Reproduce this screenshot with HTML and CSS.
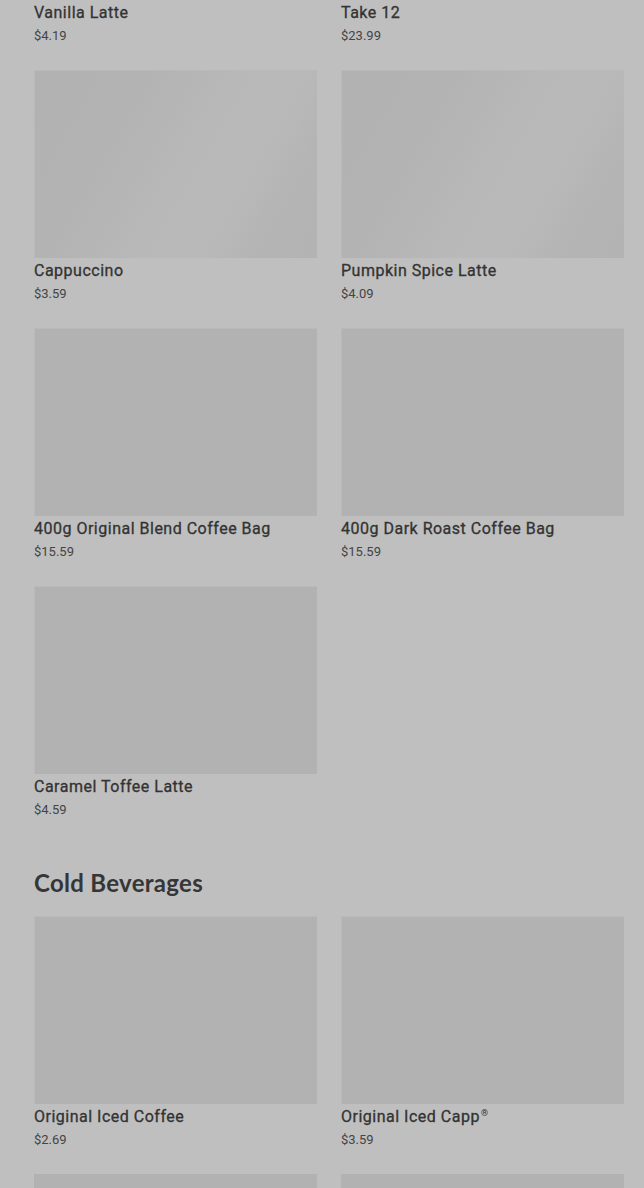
FILE: index.html
```html
<!DOCTYPE html>
<html lang="en">
    <head>
        <meta charset="UTF-8" />
        <meta name="viewport" content="width=device-width, initial-scale=1.0" />
        <title>Menu</title>
        <link rel="stylesheet" href="styles.css">
    </head>
    <body>
        <div class="menu">
            <section class="category">
                <div class="product-grid">
                    <div class="product">
                        <div class="product-image"></div>
                        <div class="product-name">Vanilla Latte</div>
                        <div class="product-price">$4.19</div>
                    </div>
                    <div class="product">
                        <div class="product-image"></div>
                        <div class="product-name">Take 12</div>
                        <div class="product-price">$23.99</div>
                    </div>
                    <div class="product">
                        <div class="product-image shimmer"></div>
                        <div class="product-name">Cappuccino</div>
                        <div class="product-price">$3.59</div>
                    </div>
                    <div class="product">
                        <div class="product-image shimmer"></div>
                        <div class="product-name">Pumpkin Spice Latte</div>
                        <div class="product-price">$4.09</div>
                    </div>
                    <div class="product">
                        <div class="product-image"></div>
                        <div class="product-name">400g Original Blend Coffee Bag</div>
                        <div class="product-price">$15.59</div>
                    </div>
                    <div class="product">
                        <div class="product-image"></div>
                        <div class="product-name">400g Dark Roast Coffee Bag</div>
                        <div class="product-price">$15.59</div>
                    </div>
                    <div class="product">
                        <div class="product-image"></div>
                        <div class="product-name">Caramel Toffee Latte</div>
                        <div class="product-price">$4.59</div>
                    </div>
                </div>
            </section>
            <section class="category">
                <h2 class="category-title">Cold Beverages</h2>
                <div class="product-grid">
                    <div class="product">
                        <div class="product-image"></div>
                        <div class="product-name">Original Iced Coffee</div>
                        <div class="product-price">$2.69</div>
                    </div>
                    <div class="product">
                        <div class="product-image"></div>
                        <div class="product-name">Original Iced Capp<sup class="reg">&reg;</sup></div>
                        <div class="product-price">$3.59</div>
                    </div>
                </div>
            </section>
        </div>
    </body>
</html>
```

FILE: styles.css
```css
body {
    margin: 0;
    background-color: #bfbfbf;
    color: #3b3b3b;
    font-family: Roboto, "Liberation Sans", sans-serif;
    overflow: hidden;
}

/* page is scrolled: the first row of images sits above the fold */
div.menu {
    margin-top: -188px;
    padding: 0 20px 0 34px;
}

.product-grid {
    display: grid;
    grid-template-columns: 1fr 1fr;
    column-gap: 24px;
    row-gap: 24px;
}

/* the next row only peeks in at the bottom edge */
.category:last-child .product-grid::after {
    content: "";
    grid-column: 1 / -1;
    height: 14px;
    background: linear-gradient(to right, #b2b2b2 0 283px, transparent 283px 307px, #b2b2b2 307px);
}

.product-image {
    height: 188px;
    background-color: #b2b2b2;
    box-shadow: inset 1px 1px 0 #b9b9b9;
}

.product-image.shimmer {
    background-image: linear-gradient(
        120deg,
        #b2b2b2 0%,
        #b3b3b3 30%,
        #b6b6b6 44%,
        #b9b9b9 58%,
        #b9b9b9 70%,
        #b4b4b4 84%,
        #b3b3b3 100%
    );
}

.product-name {
    font-size: 16px;
    font-weight: 400;
    line-height: 26px;
    letter-spacing: 0.5px;
    color: #333333;
    -webkit-text-stroke: 0.3px #333333;
}

.product-name .reg {
    font-size: 9px;
    line-height: 0;
    vertical-align: 6px;
    margin-left: 1px;
    -webkit-text-stroke: 0;
}

.product-price {
    font-size: 13px;
    line-height: 20px;
    color: #444444;
}

.category-title {
    margin: 47px 0 17px;
    font-family: Lato, "Liberation Sans", sans-serif;
    font-size: 24px;
    font-weight: 700;
    line-height: 32px;
    letter-spacing: 0.3px;
    color: #363636;
}
```
